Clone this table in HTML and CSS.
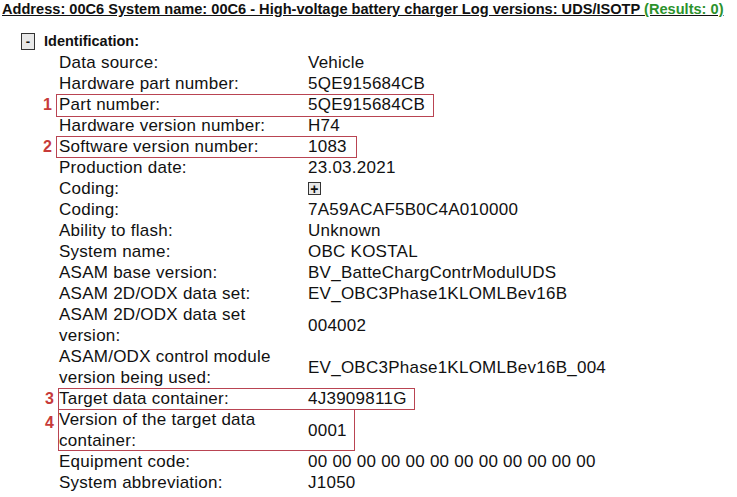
FILE: index.html
```html
<!DOCTYPE html>
<html>
<head>
<meta charset="utf-8">
<link rel="stylesheet" href="styles.css">
</head>
<body>
<div class="title"><span class="title-main">Address: 00C6 System name: 00C6 - High-voltage battery charger Log versions: UDS/ISOTP </span><span class="results">(Results: 0)</span></div>
<div class="section">
  <div class="section-head"><span class="toggle">-</span><span class="section-name">Identification:</span></div>
  <div class="props">
    <div class="label">Data source:</div><div class="value">Vehicle</div>
    <div class="label">Hardware part number:</div><div class="value">5QE915684CB</div>
    <div class="label">Part number:</div><div class="value">5QE915684CB</div>
    <div class="label">Hardware version number:</div><div class="value">H74</div>
    <div class="label">Software version number:</div><div class="value">1083</div>
    <div class="label">Production date:</div><div class="value">23.03.2021</div>
    <div class="label">Coding:</div><div class="value"><span class="toggle small">+</span></div>
    <div class="label">Coding:</div><div class="value">7A59ACAF5B0C4A010000</div>
    <div class="label">Ability to flash:</div><div class="value">Unknown</div>
    <div class="label">System name:</div><div class="value">OBC KOSTAL</div>
    <div class="label">ASAM base version:</div><div class="value">BV_BatteChargContrModulUDS</div>
    <div class="label">ASAM 2D/ODX data set:</div><div class="value">EV_OBC3Phase1KLOMLBev16B</div>
    <div class="label">ASAM 2D/ODX data set version:</div><div class="value">004002</div>
    <div class="label">ASAM/ODX control module version being used:</div><div class="value">EV_OBC3Phase1KLOMLBev16B_004</div>
    <div class="label">Target data container:</div><div class="value">4J3909811G</div>
    <div class="label">Version of the target data container:</div><div class="value">0001</div>
    <div class="label">Equipment code:</div><div class="value">00 00 00 00 00 00 00 00 00 00 00 00</div>
    <div class="label">System abbreviation:</div><div class="value">J1050</div>
    <div class="mark m1"><span class="num">1</span></div>
    <div class="mark m2"><span class="num">2</span></div>
    <div class="mark m3"><span class="num">3</span></div>
    <div class="mark m4"><span class="num">4</span></div>
  </div>
</div>
</body>
</html>
```

FILE: styles.css
```css
html, body {
  margin: 0;
  padding: 0;
  background: #fff;
}
body {
  font-family: "Liberation Sans", Arial, sans-serif;
  color: #111;
  padding: 1px 2px;
}
.title {
  font-weight: bold;
  font-size: 14.6px;
  line-height: 17px;
  text-decoration: underline;
  white-space: nowrap;
}
.results {
  color: #2c922c;
}
.section {
  margin-top: 12px;
}
.section-head {
  display: flex;
  align-items: center;
  gap: 9px;
  padding-left: 19px;
  height: 22px;
}
.section-name {
  font-weight: bold;
  font-size: 14.5px;
}
.toggle {
  display: inline-flex;
  align-items: center;
  justify-content: center;
  box-sizing: border-box;
  width: 14px;
  height: 17px;
  border: 1px solid #333;
  background: #e8e8e8;
  font-weight: bold;
  font-size: 13px;
  line-height: 1;
}
.toggle.small {
  width: 13px;
  height: 13px;
  font-size: 14px;
}
.props {
  position: relative;
  display: grid;
  grid-template-columns: 249px auto;
  align-items: center;
  margin-left: 57px;
  font-size: 17px;
  letter-spacing: 0.25px;
  line-height: 21px;
}
.label {
  padding-right: 12px;
}
.value {
  display: flex;
  align-items: center;
  min-height: 21px;
}
.mark {
  position: absolute;
  border: 1px solid #b94452;
  box-sizing: border-box;
}
.num {
  position: absolute;
  left: -14px;
  top: 0;
  color: #c73a3a;
  font-weight: bold;
  font-size: 16px;
  line-height: 20px;
  letter-spacing: 0;
}
.m1 { left: -3px; top: 42px; width: 378px; height: 23px; }
.m2 { left: -3px; top: 84px; width: 301px; height: 22px; }
.m3 { left: -1px; top: 336px; width: 357px; height: 22px; }
.m4 { left: -1px; top: 357px; width: 297px; height: 42px; }
.m4 .num { top: 3px; }
```
